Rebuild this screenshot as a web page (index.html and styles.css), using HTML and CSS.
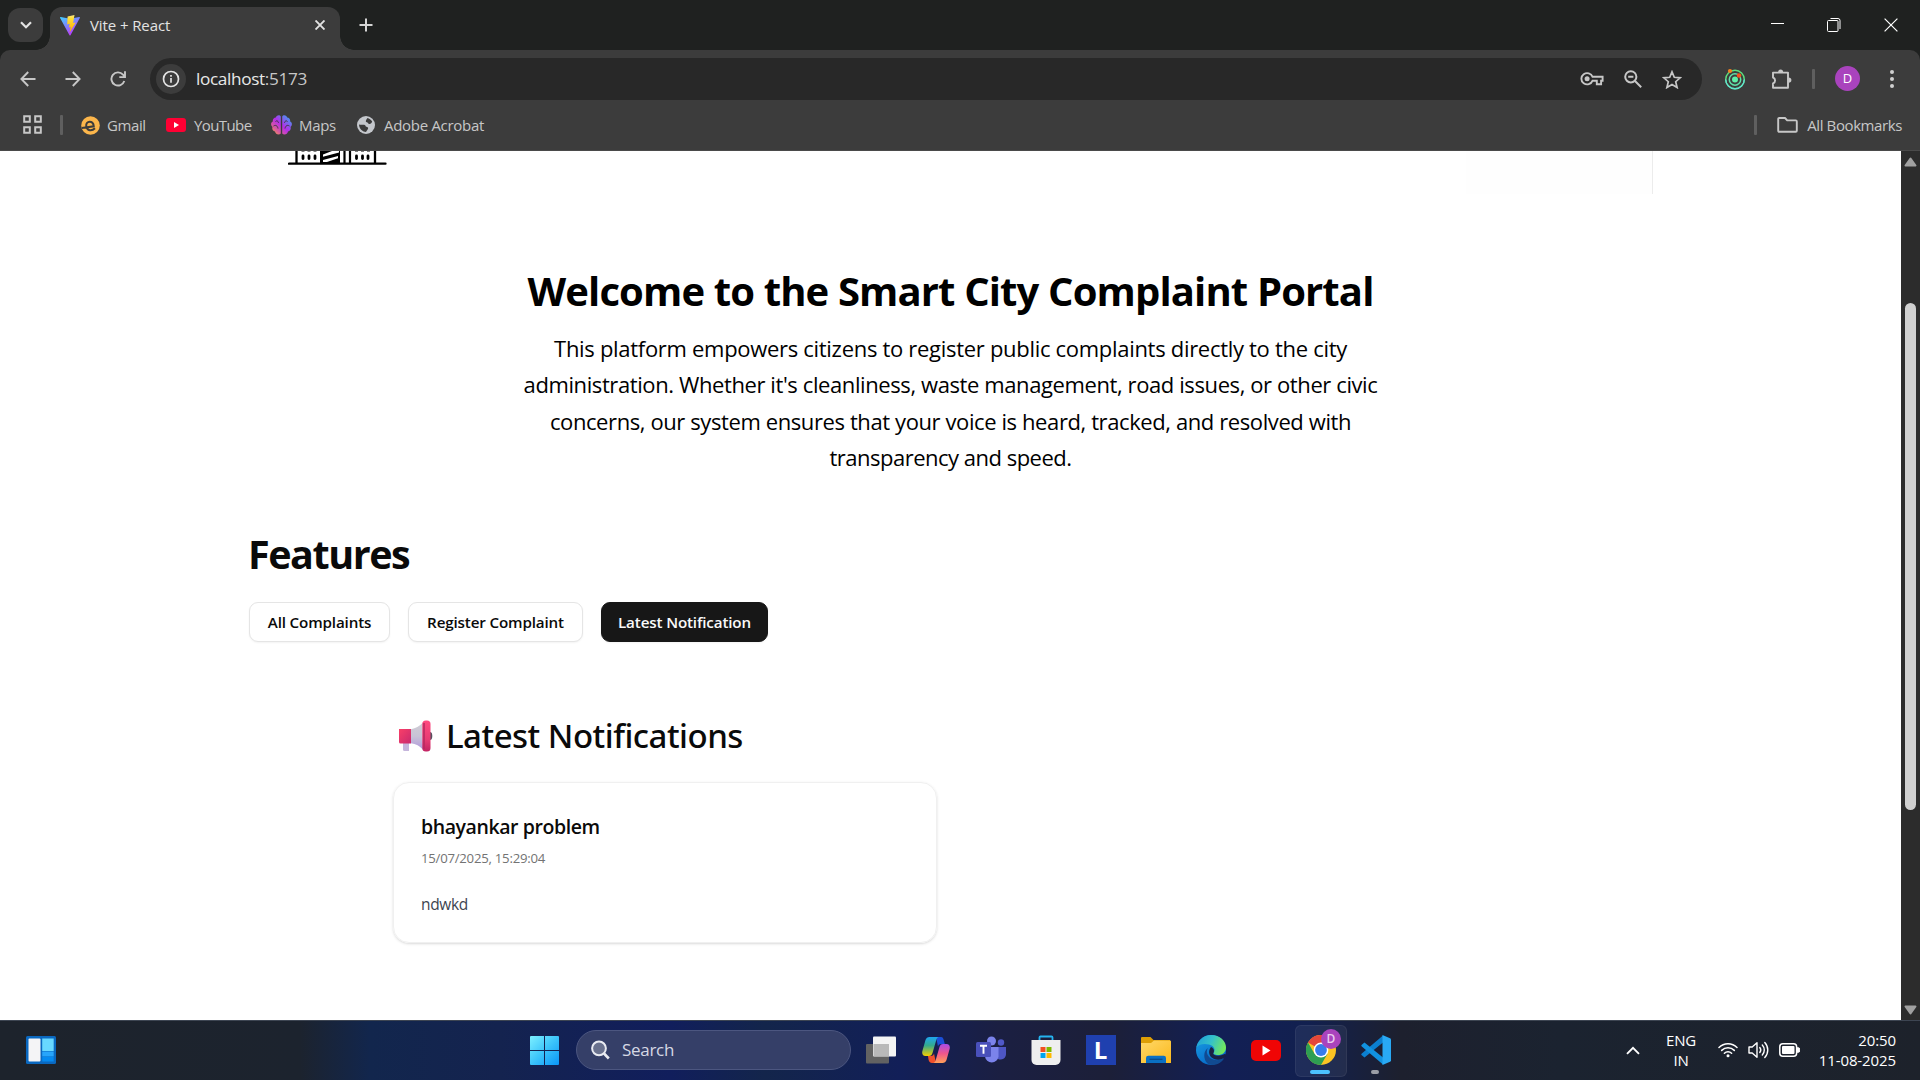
FILE: index.html
```
<!DOCTYPE html>
<html lang="en">
<head>
<meta charset="utf-8">
<title>Vite + React</title>
<link rel="stylesheet" href="styles.css">
</head>
<body>
<div class="screen">
  <header class="tabstrip">
    <div class="tab-search"><svg width="12" height="8" viewBox="0 0 12 8" fill="none" stroke="#e3e3e3" stroke-width="2.2"><path d="M1 1.2l5 5 5-5"/></svg></div>
    <div class="tab">
      <svg class="favicon" width="20" height="21" viewBox="0 0 20 21">
        <defs>
          <linearGradient id="va" x1="0" y1="0" x2=".6" y2="1"><stop offset="0" stop-color="#41d1ff"/><stop offset="1" stop-color="#bd34fe"/></linearGradient>
          <linearGradient id="vb" x1="0" y1="0" x2="0" y2="1"><stop offset="0" stop-color="#ffea83"/><stop offset=".2" stop-color="#ffdd35"/><stop offset="1" stop-color="#ffa800"/></linearGradient>
        </defs>
        <path fill="url(#va)" d="M19.8 3L10.500 20.200a.6.6 0 0 1-1 0L.1 3a.6.6 0 0 1 .6-.9L10 3.700l9.200-1.600a.6.6 0 0 1 .6.900z"/>
        <path fill="url(#vb)" d="M14.500.1L7.600 1.400 7.200 9.400l2.500-.6-.8 3.700 1.800-.5-1.200 5.700L15.700 7.600l-2.600.4z"/>
      </svg>
      <span class="tab-title">Vite + React</span>
      <svg class="tab-close" width="10" height="10" viewBox="0 0 10 10" stroke="#e3e3e3" stroke-width="1.9"><path d="M.5.5l9 9M9.500.5l-9 9"/></svg>
    </div>
    <svg class="new-tab" width="14" height="14" viewBox="0 0 14 14" stroke="#d5d5d5" stroke-width="2"><path d="M7 .5v13M.5 7h13"/></svg>
    <div class="window-controls">
      <svg width="13" height="13" viewBox="0 0 13 13" stroke="#fff"><path d="M0 5.500h13"/></svg>
      <svg width="14" height="14" viewBox="0 0 14 14" fill="none" stroke="#fff"><rect x=".5" y="2.500" width="10.500" height="11" rx="1"/><path d="M3.500.5h7.500a2 2 0 0 1 2 2v8.500"/></svg>
      <svg width="14" height="14" viewBox="0 0 14 14" stroke="#fff" stroke-width="1.200"><path d="M.6.6l12.800 12.800M13.400.6L.6 13.400"/></svg>
    </div>
  </header>

  <section class="chrome">
    <div class="toolbar">
      <div class="nav">
        <svg width="16" height="16" viewBox="0 0 16 16" fill="none" stroke="#c7c7c7" stroke-width="1.900"><path d="M15.500 8H1.800M8.200 1L1.400 8l6.800 7"/></svg>
        <svg width="16" height="16" viewBox="0 0 16 16" fill="none" stroke="#c7c7c7" stroke-width="1.900"><path d="M.5 8h13.700M7.800 1l6.800 7-6.800 7"/></svg>
        <svg width="16" height="16" viewBox="0 0 16 16" fill="none" stroke="#c7c7c7" stroke-width="1.900"><path d="M14.300 10A6.600 6.600 0 1 1 13 3.600l2 2.200M15 .3v5.800H9.300"/></svg>
      </div>
      <div class="omnibox">
        <span class="site-info"><svg width="18" height="18" viewBox="0 0 18 18" fill="none" stroke="#e3e3e3" stroke-width="1.700"><circle cx="9" cy="9" r="7.500"/><path d="M9 8v4.800M9 5v1.800"/></svg></span>
        <span class="url">localhost<span class="port">:5173</span></span>
        <div class="omni-actions">
          <svg width="24" height="16" viewBox="0 0 24 16" fill="none" stroke="#c7c7c7" stroke-width="1.900"><path d="M12.600 5.800H22.600v3.900h-1.500v3.500h-4.300V9.700h-4.200a5.800 5.600 0 1 1 0-3.900z"/><circle cx="7.100" cy="7.800" r="2.500" fill="#c7c7c7" stroke="none"/></svg>
          <svg width="18" height="18" viewBox="0 0 18 18" fill="none" stroke="#c7c7c7" stroke-width="2"><circle cx="6.800" cy="6.800" r="5.600"/><path d="M11 11l6.200 6.200M4.200 6.800h5.200"/></svg>
          <svg width="20" height="19" viewBox="0 0 20 19" fill="none" stroke="#c7c7c7" stroke-width="1.700"><path d="M10 1.800l2.300 5.500 5.900.5-4.500 3.900 1.400 5.800L10 14.400l-5.100 3.100 1.400-5.800L1.800 7.800l5.900-.5z"/></svg>
        </div>
      </div>
      <div class="extensions">
        <svg width="22" height="22" viewBox="0 0 22 22" fill="none"><circle cx="11" cy="11.500" r="9.300" stroke="#5ee07e" stroke-width="1.400"/><path d="M1.700 11.500a9.300 9.300 0 0 0 18.600 0" stroke="#62e3d0" stroke-width="1.400"/><circle cx="11" cy="11.500" r="5.700" stroke="#5fe0a8" stroke-width="1.500"/><circle cx="11" cy="11.500" r="3" fill="#5ef0a8"/><circle cx="6" cy="3" r="2.100" fill="#f58220"/><circle cx="15" cy="7.500" r="2.200" fill="#f4511e"/></svg>
        <svg width="21" height="21" viewBox="0 0 21 21" fill="none"><path stroke="#c7c7c7" stroke-width="1.900" stroke-linejoin="round" d="M2 3.600h15v15.200H2v-4.300a3.200 3.200 0 0 0 0-6z"/><path fill="#c7c7c7" d="M7 3.500a2.600 2.900 0 0 1 5.200 0zM17.500 8.500a2.900 2.600 0 0 1 0 5.200z"/></svg>
        <i class="divider"></i>
        <span class="avatar">D</span>
        <svg width="4" height="18" viewBox="0 0 4 18" fill="#d0d0d0"><circle cx="2" cy="2" r="2"/><circle cx="2" cy="9" r="2"/><circle cx="2" cy="16" r="2"/></svg>
      </div>
    </div>
    <nav class="bookmarks">
      <svg class="apps" width="19" height="19" viewBox="0 0 19 19" fill="none" stroke="#c7c7c7" stroke-width="2"><path d="M1.200 1.200h5.600v5.600H1.200zM12.200 1.200h5.600v5.600h-5.600zM1.200 12.200h5.600v5.600H1.200zM12.200 12.200h5.600v5.600h-5.600z"/></svg>
      <i class="divider"></i>
      <a class="bm gmail"><svg width="19" height="19" viewBox="0 0 19 19"><circle cx="9.500" cy="9.500" r="9.300" fill="#fcb64b"/><path d="M.5 10.800H12.600C13.300 4.300 5.200 4 5.200 9.500c0 5 5 6 8.300 3.300" fill="none" stroke="#3c3c3c" stroke-width="2" transform="rotate(-8 9.500 9.500)"/></svg><span>Gmail</span></a>
      <a class="bm youtube"><svg width="20" height="14" viewBox="0 0 20 14"><rect width="20" height="14" rx="3" fill="#f03"/><path d="M8 4l5 3-5 3z" fill="#fff"/></svg><span>YouTube</span></a>
      <a class="bm maps"><svg width="21" height="20" viewBox="0 0 21 20"><defs><linearGradient id="br" x1="1" y1="0" x2="0" y2="1"><stop offset="0" stop-color="#27b4f5"/><stop offset=".5" stop-color="#b52de8"/><stop offset=".75" stop-color="#d95b9c"/><stop offset="1" stop-color="#ffb02e"/></linearGradient></defs><path fill="url(#br)" d="M9.800 1.500v17C8 20.600 4.500 19.500 4 16.500 1.500 16 .8 13.500 1.500 12-.6 10-.2 7.500 1.800 6.500 1.600 4 3 2.700 4.800 2.600 5.800-.2 8.800-.3 9.800 1.500zM11.200 1.500v17c1.800 2.100 5.300 1 5.800-2 2.500-.5 3.200-3 2.500-4.500 2.100-2 1.700-4.500-.3-5.500.2-2.500-1.200-3.800-3-3.900-1-2.800-4-2.900-5-1.100z"/><path fill="none" stroke="#3c3c3c" stroke-width="1" d="M4.500 6.500c1.500-1.500 3 0 3 1.500M2.500 11c2.500-1.500 4 0 4.500 2.500M16.500 6.500c-1.500-1.500-3 0-3 1.500M18.500 11c-2.500-1.500-4 0-4.500 2.500"/></svg><span>Maps</span></a>
      <a class="bm adobe"><svg width="18" height="18" viewBox="0 0 18 18"><circle cx="9" cy="9" r="9" fill="#c4c7cc"/><path fill="#3c3c3c" d="M10.500 2.100c1.500.4 3.600 1.600 4.700 3.400-.9 2.500-2.300 2.600-3.200 2.400-1.200-.3-.9-1.700-2.200-1.700-1.600 0-1-2.200.7-4.100zM2 8.500c2.300.4 3.400 0 5.200.2 1.800.3 1 1.700 2.300 2.100 1.600.5 2 1.100 1.400 2.100-.8 1.300-1.600 2.400-1.900 3.100-3-.2-6.700-2.500-7-7.500z"/></svg><span>Adobe Acrobat</span></a>
      <i class="divider all-divider"></i>
      <a class="bm all"><svg width="21" height="16" viewBox="0 0 21 16" fill="none" stroke="#c7c7c7" stroke-width="1.900" stroke-linejoin="round"><path d="M1.200 2a1 1 0 0 1 1-1H8l2.200 2.400h8.600a1 1 0 0 1 1 1V13.800a1 1 0 0 1-1 1H2.200a1 1 0 0 1-1-1z"/></svg><span>All Bookmarks</span></a>
    </nav>
  </section>

  <div class="viewport">
    <main class="page">
      <div class="site-header">
        <svg class="building" width="99" height="15" viewBox="0 0 99 15">
          <path d="M1 12.700h96.500" stroke="#000" stroke-width="2.300" stroke-linecap="round"/>
          <path d="M8.500 0v12M87 0v12" stroke="#000" stroke-width="2.300"/>
          <path d="M32 0h20v12H32z"/>
          <path d="M35 3.500l9-3.500h7v1.500L35 5.800zM35 9l15-4v2.300L39 11h-4z" fill="#fff"/>
          <path d="M56.500 0v12M62 0v12" stroke="#000" stroke-width="2.200"/>
          <path d="M15 5v2.500M21 5v2.500M27 5v2.500M68.500 5v2.500M74.500 5v2.500M80 5v2.500" stroke="#000" stroke-width="2.800" stroke-linecap="round"/>
          <path d="M13.500 0h3M19.500 0h3M25.500 0h3M67 0h3M73 0h3M79 0h3" stroke="#000" stroke-width="1"/>
        </svg>
        <div class="header-menu"></div>
      </div>
      <section class="intro">
        <h1>Welcome to the Smart City Complaint Portal</h1>
        <p><span class="lead">This platform empowers citizens to register public complaints directly to the city</span><br>administration. Whether it's cleanliness, waste management, road issues, or other civic<br>concerns, our system ensures that your voice is heard, tracked, and resolved with<br><span class="last">transparency and speed.</span></p>
      </section>
      <section class="features">
        <h2>Features</h2>
        <div class="buttons">
          <button class="btn all-complaints">All Complaints</button>
          <button class="btn register">Register Complaint</button>
          <button class="btn active latest">Latest Notification</button>
        </div>
      </section>
      <section class="notifications">
        <h3>
          <svg width="35" height="32" viewBox="0 0 35 32">
            <defs>
              <linearGradient id="ma" x1="0" y1="0" x2="1" y2="1"><stop offset="0" stop-color="#f93f68"/><stop offset="1" stop-color="#c92a6e"/></linearGradient>
              <linearGradient id="mb" x1="0" y1="0" x2="0" y2="1"><stop offset="0" stop-color="#cfcdd4"/><stop offset=".5" stop-color="#c9c4d6"/><stop offset="1" stop-color="#b097dd"/></linearGradient>
              <linearGradient id="mc" x1="0" y1="0" x2="0" y2="1"><stop offset="0" stop-color="#ff4a80"/><stop offset=".6" stop-color="#e83c73"/><stop offset="1" stop-color="#c22363"/></linearGradient>
            </defs>
            <path d="M4 22h6v9H5.500Q4 31 4 29.500z" fill="#c5b5dc"/>
            <ellipse cx="31" cy="16" rx="2.300" ry="4" fill="#57505f"/>
            <path d="M12 9.200Q19 8 24.500 2v28Q19 24 12 23.200z" fill="url(#mb)"/>
            <path d="M0 9h12v14.500H1.500Q0 23.500 0 22z" fill="url(#ma)"/>
            <rect x="23.300" y=".5" width="8.200" height="31" rx="3.500" fill="url(#mc)"/>
            <path d="M25 3v26" stroke="#b5285f" stroke-width="1.500"/>
          </svg>
          <span>Latest Notifications</span>
        </h3>
        <article class="card">
          <h4>bhayankar problem</h4>
          <time>15/07/2025, 15:29:04</time>
          <p>ndwkd</p>
        </article>
      </section>
    </main>
    <aside class="scrollbar">
      <svg width="13" height="10" viewBox="0 0 13 10"><path d="M6.500 1.500L11.500 8.500h-10z" fill="#a0a0a0" stroke="#a0a0a0" stroke-width="2" stroke-linejoin="round"/></svg>
      <div class="thumb"></div>
      <svg class="down" width="13" height="10" viewBox="0 0 13 10"><path d="M6.500 8.500L11.500 1.500h-10z" fill="#a0a0a0" stroke="#a0a0a0" stroke-width="2" stroke-linejoin="round"/></svg>
    </aside>
  </div>

  <footer class="taskbar">
    <svg class="widgets" width="30" height="28" viewBox="0 0 30 28"><rect width="30" height="28" rx="1.500" fill="#0a68c0"/><rect x="2.500" y="2.500" width="12" height="23" rx="1" fill="#f4f4f6"/><path d="M16.200 2.500h11.500V15H16.200z" fill="#68d8ff"/><path d="M16.200 15.500h11.500v5H16.200z" fill="#27a5fb"/><path d="M16.200 20.800h11.500v4.700H16.200z" fill="#058af0"/></svg>
    <svg class="start" width="29" height="29" viewBox="0 0 29 29"><defs><linearGradient id="wg" x1="0" y1="0" x2="29" y2="29" gradientUnits="userSpaceOnUse"><stop offset="0" stop-color="#7df0ff"/><stop offset=".5" stop-color="#3cc4fb"/><stop offset="1" stop-color="#0a95f7"/></linearGradient></defs><path fill="url(#wg)" d="M1 0h13v14H0V1a1 1 0 0 1 1-1zM15 0h13a1 1 0 0 1 1 1v13H15zM0 15h14v14H1a1 1 0 0 1-1-1zM15 15h14v13a1 1 0 0 1-1 1H15z"/></svg>
    <div class="search"><svg width="19" height="20" viewBox="0 0 19 20" fill="#69718e" stroke="#e9ebf2" stroke-width="2"><circle cx="8" cy="8.300" r="6.900"/><path d="M13 13.500l4.800 5" stroke-width="2.600"/></svg><span>Search</span></div>
    <div class="apps-row">
      <div class="app"><svg width="30" height="30" viewBox="0 0 30 30"><rect x="0" y="9" width="23" height="19.500" rx="1" fill="#626262"/><rect x="7" y="1.500" width="23" height="20" rx="1" fill="#f4f4f4"/><path d="M7.500 9H23v12H7.500z" fill="#b9b9b9"/></svg></div>
      <div class="app"><svg width="28" height="28" viewBox="0 0 28 28"><defs>
        <linearGradient id="ca" x1="0" y1="0" x2="0" y2="1"><stop offset="0" stop-color="#1fa6f0"/><stop offset=".45" stop-color="#34a98d"/><stop offset="1" stop-color="#f5d000"/></linearGradient>
        <linearGradient id="cb" x1="0" y1="0" x2="0" y2="1"><stop offset="0" stop-color="#a94be8"/><stop offset=".5" stop-color="#f0568c"/><stop offset="1" stop-color="#ffa058"/></linearGradient></defs>
        <path d="M14 1h5c2 0 2.500 2 3 4l.8 3H19c-2 0-2.500 1-3 2.500z" fill="#1b4fd8"/>
        <path d="M14 27H10c-2 0-3-1.500-3.500-3.500L6 20h3c2 0 2.500-1 3-2.500z" fill="#f0502c"/>
        <path d="M7.500 1H17c-1.500 0-2.300 1.500-2.800 3.200L10.500 17c-.6 2-1.500 3-3.500 3H3.500C.6 20-.3 17.500.4 15L3.500 4C4.200 2 5.500 1 7.500 1z" fill="url(#ca)"/>
        <path d="M20.500 27H11c1.500 0 2.300-1.500 2.800-3.200L17.500 11c.6-2 1.500-3 3.500-3h3.500c2.900 0 3.800 2.500 3.100 5l-3.100 11c-.7 2-2 3-4 3z" fill="url(#cb)"/></svg></div>
      <div class="app"><svg width="30" height="28" viewBox="0 0 30 28"><circle cx="25" cy="6.500" r="3.200" fill="#5059c9"/><path d="M20 11h10v7a5.500 5.500 0 0 1-8 5z" fill="#4e56c4"/><circle cx="15.500" cy="5" r="4.500" fill="#7b83eb"/><path d="M9 11h13.500v9.500a6.800 6.800 0 0 1-13.500 0z" fill="#7b83eb"/><rect x="0" y="6" width="15" height="15" rx="1.500" fill="#4950ba"/><path d="M4 9.800h7M7.500 9.800v8" stroke="#fff" stroke-width="1.900"/></svg></div>
      <div class="app"><svg width="30" height="30" viewBox="0 0 30 30"><path d="M8.500 6V2.500a1 1 0 0 1 1-1h11a1 1 0 0 1 1 1V6" fill="none" stroke="#25b4f0" stroke-width="1.800"/><path d="M.5 5h29v20a5 5 0 0 1-5 5h-19a5 5 0 0 1-5-5z" fill="#efefef"/><path d="M9.500 12h5v5h-5z" fill="#f25022"/><path d="M15.500 12h5v5h-5z" fill="#7fba00"/><path d="M9.500 18h5v5h-5z" fill="#00a4ef"/><path d="M15.500 18h5v5h-5z" fill="#ffb900"/></svg></div>
      <div class="app"><span class="l-icon">L</span></div>
      <div class="app"><svg width="30" height="27" viewBox="0 0 30 27"><defs><linearGradient id="fg" x1="0" y1="0" x2="1" y2="1"><stop offset="0" stop-color="#ffd869"/><stop offset="1" stop-color="#fbb91c"/></linearGradient></defs><path d="M0 1a1 1 0 0 1 1-1h8.500l3 3H29v6H0z" fill="#dd9e05"/><path d="M0 6h10l3-2.500h16a1 1 0 0 1 1 1V26H0z" fill="url(#fg)"/><path d="M5 26v-5a2.300 2.300 0 0 1 2.300-2.300h15.400A2.300 2.300 0 0 1 25 21v5z" fill="#0a70c4"/><path d="M8.500 22.300h13" stroke="#0a4a8a" stroke-width="1.300"/></svg></div>
      <div class="app"><svg width="30" height="30" viewBox="0 0 30 30"><defs>
        <linearGradient id="ea" x1="0" y1=".2" x2="1" y2=".5"><stop offset="0" stop-color="#1fa0d8"/><stop offset=".5" stop-color="#35c1c9"/><stop offset="1" stop-color="#73e85c"/></linearGradient>
        <linearGradient id="eb" x1="0" y1="0" x2=".6" y2="1"><stop offset="0" stop-color="#1aa0e4"/><stop offset="1" stop-color="#0567c7"/></linearGradient></defs>
        <circle cx="15" cy="15" r="15" fill="url(#eb)"/>
        <path d="M12 13c-3 4 0 11 7 12 3.500.5 6.500-.5 9-1.500C25 28.500 19 31 13 29.500 8 27 6 17 12 13z" fill="#114a91"/>
        <path d="M.4 12.500C2 5 8 0 15 0c9 0 15 6 15 12.500 0 5-4 7.500-8 7.500-3 0-5-1.200-4.500-2 2-2.500 1.500-7-4.500-8.500C7 8 2 10 .4 12.500z" fill="url(#ea)"/>
        <path d="M15 12c3 1.500 3.800 4 2.200 6.300C17 20.500 23 22 28.600 19c1.400-.5 1.400 1 .4 3-4 4-11 3-14 0-2.500-3-2.500-7 0-10z" fill="#1a2145"/></svg></div>
      <div class="app"><svg width="30" height="21" viewBox="0 0 30 21"><rect width="30" height="21" rx="5" fill="#f00505"/><path d="M11.500 5.500l8 5-8 5z" fill="#fff"/></svg></div>
      <div class="app current"><svg width="30" height="30" viewBox="0 0 30 30"><circle cx="15" cy="15" r="15" fill="#fbc116"/><path d="M15 15L2 7.500A15 15 0 0 1 28 7.500H15z" fill="#e33b2e"/><path d="M2 7.500A15 15 0 0 0 15 30l6.500-11.200L15 15 8.500 18.800z" fill="#219a48"/><circle cx="15" cy="15" r="7.400" fill="#fff"/><circle cx="15" cy="15" r="5.900" fill="#2a74ea"/></svg><b class="badge">D</b><i class="running"></i></div>
      <div class="app"><svg width="30" height="30" viewBox="0 0 30 30"><path d="M22 7.500L3.500 22.500.8 20.200a1 1 0 0 1 0-1.600L22 .5z" fill="#0b7fd0"/><path d="M22 22.500L3.500 7.500.8 9.800a1 1 0 0 0 0 1.600L22 29.500z" fill="#1192e0"/><path d="M21.500 0l7.500 3.200a1.700 1.700 0 0 1 1 1.500v20.600a1.700 1.700 0 0 1-1 1.500L21.500 30z" fill="#29a9f4"/></svg><i class="running idle"></i></div>
    </div>
    <div class="tray">
      <svg class="chev" width="14" height="9" viewBox="0 0 14 9" fill="none" stroke="#fff" stroke-width="1.900"><path d="M1 7.800l6-6 6 6"/></svg>
      <div class="lang">ENG<br>IN</div>
      <svg width="20" height="16" viewBox="0 0 20 16" fill="none" stroke="#fff" stroke-width="1.500" stroke-linecap="round"><path d="M1 5.500a12.500 12.500 0 0 1 18 0M3.700 8.400a8.900 8.900 0 0 1 12.600 0M6.400 11.200a5.100 5.100 0 0 1 7.200 0"/><circle cx="10" cy="13.700" r="1.500" fill="#fff" stroke="none"/></svg>
      <svg width="21" height="18" viewBox="0 0 21 18" fill="none" stroke="#fff" stroke-width="1.400" stroke-linecap="round" stroke-linejoin="round"><path d="M1 6h3.200L9 1.800v14.400L4.200 12H1zM11.800 6.500a4 4 0 0 1 0 5M14.300 4a7.300 7.300 0 0 1 0 10M16.800 1.500a11 11 0 0 1 0 15"/></svg>
      <svg width="21" height="14" viewBox="0 0 21 14"><rect x=".8" y=".8" width="16.800" height="12.400" rx="3" fill="none" stroke="#fff" stroke-width="1.500"/><rect x="3" y="3" width="12.500" height="8" rx="1" fill="#fff"/><path d="M18.500 4.500a2.500 2.500 0 0 1 0 5z" fill="#fff" stroke="#fff"/></svg>
      <div class="clock">20:50<br>11-08-2025</div>
    </div>
  </footer>
</div>
</body>
</html>
```
FILE: styles.css
```
* { box-sizing: border-box; }
body { margin: 0; font-family: "Open Sans", "Noto Sans", sans-serif; background: #1f2120; overflow: hidden; }
svg { display: block; flex: none; }
span, a, div { white-space: nowrap; }
h1, h2, h3, h4, p { margin: 0; }

.screen { width: 1920px; height: 1080px; display: grid; grid-template-rows: 50px 101px 869px 60px; }

/* tab strip */
.tabstrip { background: #1f2120; display: flex; align-items: flex-start; }
.tab-search { width: 35px; height: 34px; margin: 8px 0 0 8px; border-radius: 12px; background: #3c3c3c; display: flex; align-items: center; justify-content: center; }
.tab { position: relative; margin: 7px 0 0 7px; width: 290px; height: 43px; border-radius: 12px 12px 0 0; background: #3c3c3c; display: flex; align-items: center; padding: 0 15px 16px 10px; }
.tab::before, .tab::after { content: ""; position: absolute; bottom: 0; width: 14px; height: 14px; }
.tab::before { left: -14px; background: radial-gradient(circle at 0 0, transparent 13.500px, #3c3c3c 14px); }
.tab::after { right: -14px; background: radial-gradient(circle at 100% 0, transparent 13.500px, #3c3c3c 14px); }
.favicon { margin-top: 9px; }
.tab-title { margin: 8px 0 0 10px; font-size: 15px; line-height: 20px; letter-spacing: -.1px; color: #e3e3e3; }
.tab-close { margin: 9px 0 0 auto; }
.new-tab { margin: 18px 0 0 19px; }
.window-controls { margin: 18px 22px 0 auto; display: flex; gap: 43px; }

/* browser toolbar */
.chrome { background: #3c3c3c; border-bottom: 1px solid #4a4a4a; border-radius: 10px 10px 0 0; }
.toolbar { height: 58px; display: flex; align-items: center; padding: 0 26px 0 20px; }
.nav { display: flex; gap: 29px; width: 130px; padding-bottom: 1px; }
.omnibox { width: 1552px; height: 42px; border-radius: 21px; background: #282828; display: flex; align-items: center; padding: 0 20px 0 6px; }
.site-info { width: 30px; height: 30px; border-radius: 50%; background: #3c3c3c; display: flex; align-items: center; justify-content: center; }
.url { margin-left: 10px; font-size: 17.200px; letter-spacing: -.35px; line-height: 24px; color: #e8e8e8; }
.port { color: #c7c7c7; }
.omni-actions { margin-left: auto; display: flex; align-items: center; gap: 20px; }
.extensions { margin-left: auto; display: flex; align-items: center; }
.extensions svg + svg { margin-left: 25px; }
.divider { width: 3px; height: 20px; border-radius: 1px; background: #5f5f5f; flex: none; }
.extensions .divider { margin-left: 20px; }
.avatar { width: 25px; height: 25px; margin: 0 30px 2px 20px; border-radius: 50%; background: #a943bd; color: #fff; font-size: 13px; line-height: 25px; text-align: center; }

.bookmarks { height: 42px; display: flex; align-items: center; padding: 0 18px 9px 23px; }
.bookmarks .divider { margin-left: 18px; }
.bm { display: flex; align-items: center; gap: 9px; font-size: 15px; line-height: 20px; color: #c7c7c7; }
.bm svg { margin-top: 1px; }
.gmail { margin-left: 18px; width: 85px; gap: 7px; letter-spacing: -.4px; }
.youtube { width: 105px; gap: 8px; letter-spacing: -.6px; }
.maps { width: 86px; letter-spacing: -.3px; gap: 7px; }
.adobe { letter-spacing: -.3px; }
.bookmarks .all-divider { margin-left: auto; }
.all { margin-left: 20px; gap: 9px; letter-spacing: -.4px; }

/* page */
.viewport { display: grid; grid-template-columns: 1901px 19px; min-height: 0; }
.page { background: #fff; color: #0a0a0a; overflow: hidden; }
.site-header { height: 43px; display: flex; padding: 0 248px 0 288px; justify-content: space-between; }
.header-menu { width: 187px; background: #fefefe; border-right: 1px solid #ececec; }
.intro { padding-top: 74px; text-align: center; color: #000; }
.intro h1 { font-size: 40px; line-height: 45px; font-weight: 700; letter-spacing: -.86px; }
.intro p { margin-top: 17px; height: 146px; font-size: 22px; line-height: 36.400px; letter-spacing: -.4px; }
.lead { letter-spacing: -.3px; }
.last { letter-spacing: -.5px; }
.features { padding: 56px 0 0 249px; }
.features h2 { font-size: 39.500px; line-height: 45px; font-weight: 700; letter-spacing: -1.450px; margin-left: -1px; }
.buttons { display: flex; gap: 18px; margin-top: 25px; }
.btn { height: 40px; padding: 0; border: 1px solid #e5e5e5; border-radius: 9px; background: #fff; color: #0a0a0a; font: 600 15.200px/20px "Open Sans", "Noto Sans", sans-serif; letter-spacing: -.15px; box-shadow: 0 1px 2px rgba(0,0,0,.05); }
.all-complaints { width: 141px; }
.register { width: 175px; }
.latest { width: 167px; }
.btn.active { background: #171717; border-color: #171717; color: #fafafa; }
.notifications { padding: 74px 0 0 393px; }
.notifications h3 { display: flex; align-items: center; height: 40px; padding-left: 6px; gap: 12px; font-family: "Noto Sans", "Open Sans", sans-serif; font-size: 33px; line-height: 40px; font-weight: 500; letter-spacing: -.5px; }
.card { margin-top: 26px; width: 544px; height: 161px; border: 1px solid #f0f0f0; border-radius: 16px; padding: 30px 27px; box-shadow: 0 1px 3px rgba(0,0,0,.12), 0 1px 2px -1px rgba(0,0,0,.1); }
.card h4 { font-size: 19.500px; line-height: 28px; font-weight: 600; letter-spacing: -.42px; }
.card time { display: block; margin-top: 7px; font-size: 13.200px; line-height: 20px; letter-spacing: -.25px; color: #737373; }
.card p { margin-top: 24px; font-size: 15.500px; line-height: 24px; letter-spacing: -.35px; color: #404550; }

.scrollbar { background: #2c2c2c; display: flex; flex-direction: column; align-items: center; padding: 6px 0 5px; }
.thumb { width: 11px; height: 507px; border-radius: 6px; background: #d0d0d0; margin-top: 136px; }
.down { margin-top: auto; }

/* taskbar */
.taskbar { border-top: 1px solid #3d4552; padding-bottom: 1px; display: flex; align-items: center; background: linear-gradient(90deg, #1d232c 0, #1c232e 300px, #12264d 370px, #14234f 500px, #111e5c 670px, #13254b 765px, #121f58 900px, #1b1f42 1000px, #1c1f38 1110px, #121f55 1220px, #12204f 1310px, #1d202e 1400px, #1b2330 1560px, #1d222b 1920px); color: #fff; }
.widgets { margin-left: 26px; }
.start { margin-left: 474px; }
.search { margin-left: 17px; width: 275px; height: 40px; border-radius: 20px; border: 1px solid #4c5680; background: #353f68; display: flex; align-items: center; padding-left: 14px; gap: 12px; font-size: 17px; line-height: 24px; letter-spacing: -.3px; color: #d5d8e4; }
.apps-row { margin-left: 2px; display: flex; height: 50px; }
.app { position: relative; width: 55px; height: 50px; display: flex; align-items: center; justify-content: center; }
.l-icon { width: 30px; height: 30px; background: #1f40af; color: #fff; font-weight: 700; font-size: 24px; line-height: 29px; text-align: center; }
.current::before { content: ""; position: absolute; left: 2px; top: 0; width: 50px; height: 50px; border-radius: 6px; background: rgba(255,255,255,.06); border: 1px solid rgba(255,255,255,.06); }
.badge { position: absolute; left: 28px; top: 4px; width: 20px; height: 20px; border-radius: 50%; background: #a943bd; font-size: 12px; line-height: 20px; font-weight: 600; text-align: center; color: #e9cdf0; }
.running { position: absolute; bottom: 1px; left: 17px; width: 20px; height: 4px; border-radius: 2px; background: #4cc2ff; }
.idle { left: 23px; width: 8px; background: #9a9da6; }
.tray { margin-left: auto; padding-right: 24px; display: flex; align-items: center; font-size: 15px; line-height: 20px; letter-spacing: -.2px; }
.lang { width: 40px; margin: 0 17px 0 21px; text-align: center; }
.tray svg + svg { margin-left: 10px; }
.clock { width: 96px; padding-bottom: 1px; text-align: right; letter-spacing: -.1px; }
```
